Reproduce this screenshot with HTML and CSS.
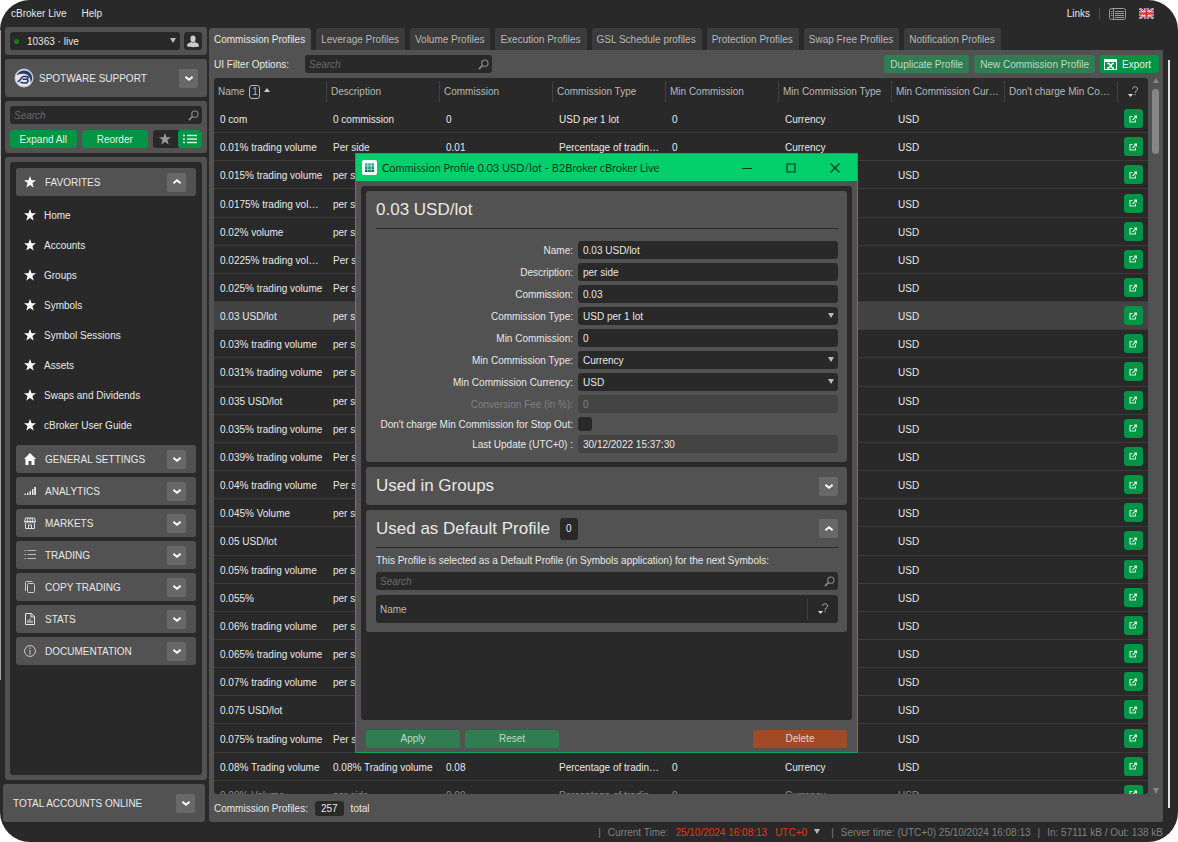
FILE: index.html
```html
<!DOCTYPE html>
<html lang="en">
<head>
    <meta charset="UTF-8">
    <meta name="viewport" content="width=device-width, initial-scale=1.0">
    <title>cBroker Live</title>
    <link rel="stylesheet" href="styles.css">
</head>
<body>
    <!-- Shared icons -->
    <svg class="sprite" aria-hidden="true">
        <symbol id="star" viewBox="0 0 12 12"><path d="M6 0l1.5 4.3H12L8.4 7.100l1.300 4.500L6 8.900l-3.700 2.700 1.300-4.500L0 4.300h4.500z" fill="currentColor"/></symbol>
        <symbol id="down" viewBox="0 0 10 10"><path d="M2 4l3 2.500L8 4" fill="none" stroke="currentColor" stroke-width="1.600"/></symbol>
        <symbol id="up" viewBox="0 0 10 10"><path d="M2 6l3-2.500L8 6" fill="none" stroke="currentColor" stroke-width="1.600"/></symbol>
        <symbol id="search" viewBox="0 0 12 12"><circle cx="7.500" cy="4.500" r="3.400" fill="none" stroke="currentColor" stroke-width="1.200"/><path d="M5 7L1 11" stroke="currentColor" stroke-width="1.800"/></symbol>
        <symbol id="open" viewBox="0 0 8 8"><path d="M3.500 1.500H1v5.500h5.500V4.500M5 1h2.500v2.500M7.300 1.200L3.500 5" fill="none" stroke="currentColor" stroke-width="1.100"/></symbol>
        <symbol id="filter" viewBox="0 0 12 14"><path d="M5.500 4c0-3 5-3 5 0 0 2-2.500 2-2.500 4.200M8 9v1.300" fill="none" stroke="#aaa" stroke-width="1"/><path d="M1 9h5l-2.500 3z" fill="#ddd"/></symbol>
    </svg>

    <div class="window">
        <div class="edge-left"></div>
        <div class="app">
            <header class="menubar">
                <a href="#">cBroker Live</a>
                <a href="#" class="help">Help</a>
                <span class="spacer"></span>
                <a href="#">Links</a>
                <span class="divider"></span>
                <button class="plain" aria-label="Layout">
                    <svg width="17" height="12" viewBox="0 0 17 12"><rect x=".5" y=".5" width="16" height="11" rx="2" fill="none" stroke="#999"/><path d="M4.500 1v10M6 3.500h9M6 5.500h9M6 7.500h9M6 9.500h9M2 3.500h1.500M2 5.500h1.500M2 7.500h1.500" stroke="#999"/></svg>
                </button>
                <button class="plain" aria-label="Language">
                    <svg width="15" height="11" viewBox="0 0 15 11"><path fill="#26338a" d="M0 0h15v11H0z"/><path d="M0 0l15 11M15 0L0 11" stroke="#fff" stroke-width="2"/><path d="M0 0l15 11M15 0L0 11" stroke="#d8362e" stroke-width="1"/><path d="M7.500 0v11M0 5.500h15" stroke="#fff" stroke-width="4"/><path d="M7.500 0v11M0 5.500h15" stroke="#d8362e" stroke-width="2.400"/></svg>
                </button>
            </header>

            <div class="columns">
                <aside class="sidebar">
                    <section class="box account">
                        <div class="dropdown account-select">
                            <span class="online"></span>
                            <select aria-label="Account"><option>10363 · live</option></select>
                        </div>
                        <button class="dark-button" aria-label="User">
                            <svg width="14" height="13" viewBox="0 0 14 13"><ellipse cx="7" cy="3.800" rx="2.600" ry="3.400" fill="#ccc"/><path d="M1 11c0-3 3-3.500 4.500-4 .8 1 2.200 1 3 0 1.500.5 4.500 1 4.500 4 0 1.500-12 1.500-12 0z" fill="#ccc"/></svg>
                        </button>
                    </section>

                    <section class="box heading-box">
                        <svg width="20" height="20" viewBox="0 0 20 20"><circle cx="10" cy="10" r="9" fill="#e4e7ee" stroke="#c4c8d0"/><path d="M2.500 7.500C5 1.500 14 .5 17.500 7c1.200 3 .5 6-1 8 .5-4.500-1.500-8.500-6-9.200C7 5.300 4.500 6 2.500 7.500z" fill="#28386f"/><path d="M3.500 13.500C7 13.500 6.500 8.500 9.500 8.500h3c2.500 0 2 2.700-.5 2.700 3 0 2.500 3.800-1 3.800-2 0-3.500 0-4.500-1M8.500 11.200H12" fill="none" stroke="#28386f" stroke-width="1.600"/></svg>
                        <span>SPOTWARE SUPPORT</span>
                        <button class="toggle" aria-label="Expand support"><svg><use href="#down"/></svg></button>
                    </section>

                    <section class="box tools">
                        <div class="search-field">
                            <input type="text" placeholder="Search" aria-label="Search menu">
                            <svg><use href="#search"/></svg>
                        </div>
                        <div class="tool-row">
                            <button class="green">Expand All</button>
                            <button class="green">Reorder</button>
                            <div class="switch">
                                <button aria-label="Favorites"><svg width="12" height="12"><use href="#star"/></svg></button>
                                <button class="on" aria-label="List"><svg width="14" height="10" viewBox="0 0 14 10"><path d="M4 1.500h10M4 5h10M4 8.500h10M0 1.500h2M0 5h2M0 8.500h2" stroke="#d5f0df" stroke-width="1.300"/></svg></button>
                            </div>
                        </div>
                    </section>

                    <nav class="box menu">
                        <div class="menu-inner">
                            <div class="group"><svg class="icon"><use href="#star"/></svg><span>FAVORITES</span><button class="toggle" aria-label="Collapse favorites"><svg><use href="#up"/></svg></button></div>
                            <ul class="favorites">
                                <li><a href="#"><svg><use href="#star"/></svg>Home</a></li>
                                <li><a href="#"><svg><use href="#star"/></svg>Accounts</a></li>
                                <li><a href="#"><svg><use href="#star"/></svg>Groups</a></li>
                                <li><a href="#"><svg><use href="#star"/></svg>Symbols</a></li>
                                <li><a href="#"><svg><use href="#star"/></svg>Symbol Sessions</a></li>
                                <li><a href="#"><svg><use href="#star"/></svg>Assets</a></li>
                                <li><a href="#"><svg><use href="#star"/></svg>Swaps and Dividends</a></li>
                                <li><a href="#"><svg><use href="#star"/></svg>cBroker User Guide</a></li>
                            </ul>
                            <div class="group"><svg class="icon" viewBox="0 0 12 12"><path d="M6 0l6 6h-1.500v6H7.500V8h-3v4h-3V6H0z" fill="#fff"/></svg><span>GENERAL SETTINGS</span><button class="toggle" aria-label="Expand general settings"><svg><use href="#down"/></svg></button></div>
                            <div class="group"><svg class="icon" viewBox="0 0 12 12"><path d="M.5 8.500H2V10H.5zM3 7.500h1.500V10H3zM5.500 6H7v4H5.500zM8 4h1.500v6H8zM10.200 2H12v8h-1.800z" fill="#e4e4e4"/></svg><span>ANALYTICS</span><button class="toggle" aria-label="Expand analytics"><svg><use href="#down"/></svg></button></div>
                            <div class="group"><svg class="icon" viewBox="0 0 12 12"><path d="M1.500 1h9l1 3.500H.5zM.5 4.500c0 2 2.700 2 2.700 0 0 2 2.800 2 2.800 0 0 2 2.800 2 2.800 0 0 2 2.700 2 2.700 0M1.500 6.500v5h9v-5M4.500 11V8h3v3M4 1L3.200 4M8 1l.8 3M6 1v3" fill="none" stroke="#ddd"/></svg><span>MARKETS</span><button class="toggle" aria-label="Expand markets"><svg><use href="#down"/></svg></button></div>
                            <div class="group"><svg class="icon" viewBox="0 0 12 12"><path d="M3.500 1.500H12M3.500 5.500H12M3.500 9.500H12M.5 1.500H2M.5 5.500H2M.5 9.500H2" stroke="#bbb"/></svg><span>TRADING</span><button class="toggle" aria-label="Expand trading"><svg><use href="#down"/></svg></button></div>
                            <div class="group"><svg class="icon" viewBox="0 0 12 12"><rect x="3.500" y="2.500" width="7" height="9" rx="1" fill="none" stroke="#ccc"/><path d="M1.500 10V1.500Q1.500.5 2.500.5H8.500" fill="none" stroke="#ccc"/></svg><span>COPY TRADING</span><button class="toggle" aria-label="Expand copy trading"><svg><use href="#down"/></svg></button></div>
                            <div class="group"><svg class="icon" viewBox="0 0 12 12"><path d="M1.500.5h6L10.500 3.500v8h-9zM7 .5V4h3.500M4 10V7M6 10V5.500M8 10V7.500" fill="none" stroke="#e4e4e4"/></svg><span>STATS</span><button class="toggle" aria-label="Expand stats"><svg><use href="#down"/></svg></button></div>
                            <div class="group"><svg class="icon" viewBox="0 0 12 12"><circle cx="6" cy="6" r="5.400" fill="none" stroke="#ccc"/><path d="M6 5v4.500M6 2.500V4" stroke="#ccc"/></svg><span>DOCUMENTATION</span><button class="toggle" aria-label="Expand documentation"><svg><use href="#down"/></svg></button></div>
                        </div>
                    </nav>

                    <section class="box heading-box total-accounts">
                        <span>TOTAL ACCOUNTS ONLINE</span>
                        <button class="toggle" aria-label="Expand total accounts"><svg><use href="#down"/></svg></button>
                    </section>
                </aside>

                <main class="main">
                    <div class="tabs">
                        <button class="tab active">Commission Profiles</button>
                        <button class="tab">Leverage Profiles</button>
                        <button class="tab">Volume Profiles</button>
                        <button class="tab">Execution Profiles</button>
                        <button class="tab">GSL Schedule profiles</button>
                        <button class="tab">Protection Profiles</button>
                        <button class="tab">Swap Free Profiles</button>
                        <button class="tab">Notification Profiles</button>
                    </div>
                    <div class="panel">
                        <div class="toolbar">
                            <label for="filter-text">UI Filter Options:</label>
                            <div class="search-field">
                                <input type="text" id="filter-text" placeholder="Search">
                                <svg><use href="#search"/></svg>
                            </div>
                            <span class="spacer"></span>
                            <button class="green soft">Duplicate Profile</button>
                            <button class="green soft">New Commission Profile</button>
                            <button class="green export">
                                <svg width="13" height="11" viewBox="0 0 13 11"><path d="M.5.500h12v10H.5z" fill="none" stroke="#fff"/><path d="M0 0h13v3H0z" fill="#fff"/><path d="M3 4.500h2l3.500 4.500H10M3 9h2l3.500-4.500H10" fill="none" stroke="#fff" stroke-width="1.300"/></svg>
                                Export
                            </button>
                        </div>
                        <div class="table-area">
                            <div class="table-wrap">
                                <table class="profiles">
                                    <thead>
                                        <tr>
                                            <th>Name <span class="order">1</span><span class="asc"></span></th>
                                            <th>Description</th>
                                            <th>Commission</th>
                                            <th>Commission Type</th>
                                            <th>Min Commission</th>
                                            <th>Min Commission Type</th>
                                            <th>Min Commission Currency</th>
                                            <th>Don't charge Min Commission for Stop Out</th>
                                            <th class="action"><svg width="12" height="14"><use href="#filter"/></svg></th>
                                        </tr>
                                    </thead>
                                    <tbody id="profileRows"></tbody>
                                </table>
                            </div>
                            <div class="scrollbar">
                                <span class="arrow-up"></span>
                                <span class="thumb"></span>
                                <span class="spacer"></span>
                                <span class="arrow-down"></span>
                            </div>
                        </div>
                        <div class="summary">Commission Profiles: <span class="count">257</span> total</div>
                    </div>
                </main>
            </div>

            <footer class="statusbar">
                <span>|</span>
                <span>Current Time:</span>
                <span class="red">25/10/2024 16:08:13</span>
                <div class="dropdown zone">
                    <select aria-label="Time zone"><option>UTC+0</option></select>
                </div>
                <span>|</span>
                <span>Server time: (UTC+0) 25/10/2024 16:08:13</span>
                <span>|</span>
                <span>In: 57111 kB / Out: 138 kB</span>
            </footer>
        </div>
        <div class="edge"></div>
    </div>

    <div class="dialog" role="dialog" aria-labelledby="dialogTitle">
        <div class="titlebar">
            <svg width="15" height="15" viewBox="0 0 15 15"><rect width="15" height="15" rx="2" fill="#fff"/><path d="M3 4.500h9" stroke="#2fae9b" stroke-width="2.600" stroke-dasharray="2.600 .6"/><path d="M3 7.600h9" stroke="#159a80" stroke-width="2.600" stroke-dasharray="2.600 .6"/><path d="M3 10.700h9" stroke="#0c6b57" stroke-width="2.600" stroke-dasharray="2.600 .6"/></svg>
            <span id="dialogTitle">Commission Profile 0.03 USD/lot - B2Broker cBroker Live</span>
            <span class="spacer"></span>
            <button class="plain" aria-label="Minimize"><svg width="10" height="10" viewBox="0 0 10 10"><path d="M0 5.500h10" stroke="#033d20"/></svg></button>
            <button class="plain" aria-label="Maximize"><svg width="10" height="10" viewBox="0 0 10 10"><path d="M1 1h8v8H1z" fill="none" stroke="#033d20" stroke-width="1.200"/></svg></button>
            <button class="plain" aria-label="Close"><svg width="10" height="10" viewBox="0 0 10 10"><path d="M.5.500l9 9M9.500.500l-9 9" stroke="#033d20" stroke-width="1.200"/></svg></button>
        </div>

        <div class="dialog-body">
            <section class="card">
                <h2 class="card-title">0.03 USD/lot</h2>
                <form class="form">
                    <label for="name">Name:</label>
                    <input type="text" id="name" value="0.03 USD/lot">
                    <label for="description">Description:</label>
                    <input type="text" id="description" value="per side">
                    <label for="commission">Commission:</label>
                    <input type="text" id="commission" value="0.03">
                    <label for="type">Commission Type:</label>
                    <div class="dropdown"><select id="type"><option>USD per 1 lot</option></select></div>
                    <label for="min">Min Commission:</label>
                    <input type="text" id="min" value="0">
                    <label for="min-type">Min Commission Type:</label>
                    <div class="dropdown"><select id="min-type"><option>Currency</option></select></div>
                    <label for="min-currency">Min Commission Currency:</label>
                    <div class="dropdown"><select id="min-currency"><option>USD</option></select></div>
                    <label for="fee" class="dim">Conversion Fee (in %):</label>
                    <input type="text" id="fee" class="dim" value="0" disabled>
                    <label for="stop-out">Don't charge Min Commission for Stop Out:</label>
                    <input type="checkbox" id="stop-out">
                    <label for="updated">Last Update (UTC+0) :</label>
                    <input type="text" id="updated" value="30/12/2022 15:37:30" readonly>
                </form>
            </section>

            <section class="card">
                <div class="card-head">
                    <h2>Used in Groups</h2>
                    <span class="spacer"></span>
                    <button class="toggle" aria-label="Expand groups"><svg><use href="#down"/></svg></button>
                </div>
            </section>

            <section class="card">
                <div class="card-head ruled">
                    <h2>Used as Default Profile</h2>
                    <span class="badge">0</span>
                    <span class="spacer"></span>
                    <button class="toggle" aria-label="Collapse default profile"><svg><use href="#up"/></svg></button>
                </div>
                <div class="default-profile">
                    <p>This Profile is selected as a Default Profile (in Symbols application) for the next Symbols:</p>
                    <div class="search-field">
                        <input type="text" placeholder="Search" aria-label="Search symbols">
                        <svg><use href="#search"/></svg>
                    </div>
                    <table class="symbols">
                        <tr>
                            <th>Name</th>
                            <th class="action"><svg width="12" height="14"><use href="#filter"/></svg></th>
                        </tr>
                    </table>
                </div>
            </section>
        </div>

        <div class="dialog-footer">
            <button class="green soft">Apply</button>
            <button class="green soft">Reset</button>
            <span class="spacer"></span>
            <button class="danger">Delete</button>
        </div>
    </div>

    <script src="script.js"></script>
</body>
</html>
```
FILE: styles.css
```css
* {
    box-sizing: border-box;
}

body {
    margin: 0;
    background-color: white;
    color: #e8e8e8;
    font-family: "Liberation Sans", Arial, sans-serif;
    font-size: 10px;
    line-height: 13px;
}

button,
input,
select {
    font: inherit;
    color: inherit;
    margin: 0;
    padding: 0;
    border: none;
}

button {
    display: flex;
    align-items: center;
    justify-content: center;
    cursor: pointer;
}

a {
    color: inherit;
    text-decoration: none;
}

h2 {
    margin: 0;
    font-size: 17px;
    line-height: 20px;
    font-weight: normal;
}

.sprite {
    position: absolute;
    width: 0;
    height: 0;
}

.spacer {
    flex: 1;
}

.window {
    display: flex;
    height: 100vh;
    background-color: #292929;
    border-radius: 30px;
    overflow: hidden;
}

.app {
    flex: 1;
    min-width: 0;
    display: flex;
    flex-direction: column;
}

.edge-left {
    width: 1px;
    margin: 30px 0 162px;
    background-color: #a4a4a4;
}

.edge {
    width: 10px;
    margin: 60px 0 34px;
    border-left: 2px solid #e4e4e4;
}

/* Top menu */
.menubar {
    display: flex;
    align-items: center;
    gap: 13px;
    height: 27px;
    padding: 0 14px 0 10px;
}

.help {
    margin-left: 2px;
}

.menubar .divider {
    width: 1px;
    height: 12px;
    margin: 0 -4px;
    background-color: #484848;
}

.plain {
    background: none;
}

.columns {
    flex: 1;
    min-height: 0;
    display: flex;
    gap: 2px;
    padding: 0 5px 0 4px;
}

/* Sidebar */
.sidebar {
    flex: none;
    width: 202px;
    display: flex;
    flex-direction: column;
    gap: 4px;
}

.box {
    background-color: #525252;
    border-radius: 3px;
    padding: 5px;
}

.account {
    display: flex;
    gap: 4px;
}

.account-select {
    flex: 1;
    display: flex;
    align-items: center;
    padding-left: 4px;
}

.account .account-select select {
    padding-left: 8px;
}

.online {
    flex: none;
    width: 5px;
    height: 5px;
    border-radius: 50%;
    background-color: #0a860a;
}

.dark-button {
    width: 18px;
    height: 18px;
    border-radius: 3px;
    background-color: #292929;
}

.heading-box {
    display: flex;
    align-items: center;
    gap: 5px;
    height: 38px;
    padding: 0 9px;
}

.heading-box span {
    flex: 1;
}

.toggle {
    width: 19px;
    height: 19px;
    border-radius: 2px;
    background-color: #686868;
    color: white;
}

.toggle svg {
    width: 12px;
    height: 12px;
}

.tools {
    display: flex;
    flex-direction: column;
    gap: 6px;
    height: 52px;
}

.tool-row {
    display: grid;
    grid-template-columns: 1fr 1fr 49px;
    gap: 5px;
}

.green {
    height: 18px;
    padding: 0 6px;
    border-radius: 3px;
    background-color: #009444;
    color: #e3f6ea;
}

.soft {
    background-color: #317d52;
    color: #b9dcc7;
}

.switch {
    display: flex;
    background-color: #292929;
    border-radius: 3px;
}

.switch button {
    flex: 1;
    background: none;
    border-radius: 3px;
    color: #999;
}

.switch .on {
    background-color: #009444;
}

.search-field {
    display: flex;
    align-items: center;
    height: 18px;
    padding: 0 3px 0 4px;
    border-radius: 3px;
    background-color: #292929;
}

.search-field input {
    flex: 1;
    min-width: 0;
    background: none;
}

.search-field input::placeholder {
    color: #6a6a6a;
    font-style: italic;
}

.search-field svg {
    width: 11px;
    height: 11px;
    color: #888;
}

.menu {
    flex: 1;
    min-height: 0;
}

.menu-inner {
    display: flex;
    flex-direction: column;
    gap: 4px;
    height: 100%;
    padding: 6px;
    border-radius: 3px;
    background-color: #292929;
}

.group {
    display: flex;
    align-items: center;
    gap: 9px;
    height: 28px;
    padding: 0 10px 0 8px;
    border-radius: 3px;
    background-color: #525252;
}

.group span {
    flex: 1;
}

.icon {
    width: 12px;
    height: 12px;
    color: white;
}

.favorites {
    margin: 0;
    padding: 0 0 1px 8px;
    list-style: none;
}

.favorites a {
    display: flex;
    align-items: center;
    gap: 8px;
    height: 30px;
}

.favorites svg {
    width: 12px;
    height: 12px;
    color: white;
}

.total-accounts {
    margin: 0 2px 0 -2px;
    padding: 0 10px;
}

/* Drop-downs */
.dropdown {
    position: relative;
    height: 18px;
    border-radius: 3px;
    background-color: #292929;
}

.dropdown select {
    width: 100%;
    height: 18px;
    padding-left: 4px;
    appearance: none;
    background: none;
}

.dropdown::after {
    content: "";
    position: absolute;
    top: 6px;
    right: 4px;
    border: 3px solid transparent;
    border-top: 5px solid #bbb;
    border-bottom: none;
    pointer-events: none;
}

/* Main panel */
.main {
    flex: 1;
    min-width: 0;
    display: flex;
    flex-direction: column;
    padding-top: 1px;
}

.tabs {
    display: flex;
    gap: 5px;
}

.tab {
    height: 22px;
    padding: 0 6px 0 5px;
    border-radius: 3px 3px 0 0;
    background-color: #3b3b3b;
    color: #b8b8b8;
}

.tab.active {
    background-color: #525252;
    color: #e8e8e8;
}

.panel {
    flex: 1;
    min-height: 0;
    display: flex;
    flex-direction: column;
    background-color: #525252;
    border-radius: 0 0 3px 3px;
}

.toolbar {
    display: flex;
    align-items: center;
    gap: 5px;
    height: 28px;
    padding: 0 4px 0 5px;
}

.toolbar label {
    width: 86px;
}

.toolbar .search-field {
    width: 187px;
}

.export {
    gap: 5px;
    padding: 0 8px 0 4px;
}

.table-area {
    flex: 1;
    min-height: 0;
    display: flex;
    padding-left: 5px;
}

.table-wrap {
    flex: 1;
    min-width: 0;
    overflow: hidden;
    border-radius: 3px;
    background-color: #292929;
}

table {
    width: 100%;
    table-layout: fixed;
    border-collapse: separate;
    border-spacing: 0;
}

th {
    height: 27px;
    padding: 1px 4px 0;
    color: #b8b8b8;
    font-weight: normal;
    text-align: left;
    white-space: nowrap;
    overflow: hidden;
    text-overflow: ellipsis;
    background: linear-gradient(#414141, #414141) right center / 1px 21px no-repeat;
}

.action {
    width: 30px;
    padding: 0;
    background: none;
    text-align: center;
}

.action svg {
    display: block;
    margin: 0 auto;
}

.profiles {
    height: 731px;
}

.profiles td {
    height: 28px;
    padding: 2px 4px 0 6px;
    border-bottom: 1px solid #3b3b3b;
    white-space: nowrap;
    overflow: hidden;
    text-overflow: ellipsis;
}

.profiles td.action {
    padding: 0;
}

.profiles .selected {
    background-color: #434343;
}

.profiles tr:last-child td {
    color: #8a8a8a;
}

.open {
    width: 19px;
    height: 19px;
    margin: 0 auto;
    border-radius: 3px;
    background-color: #009444;
}

.profiles td .open {
    color: #d5f0df;
}

.open svg {
    width: 8px;
    height: 8px;
}

.profiles th {
    line-height: 12px;
}

.order {
    display: inline-block;
    width: 11px;
    margin: 0 4px 0 2px;
    border: 1px solid #b8b8b8;
    border-radius: 3px;
    text-align: center;
}

.asc {
    display: inline-block;
    border: 3px solid transparent;
    border-top: none;
    border-bottom: 4px solid #ccc;
    vertical-align: 3px;
}

.scrollbar {
    width: 15px;
    display: flex;
    flex-direction: column;
    align-items: center;
}

.thumb {
    width: 7px;
    height: 65px;
    margin-top: 6px;
    border-radius: 4px;
    background-color: #868686;
}

.arrow-up {
    border: 3px solid transparent;
    border-top: none;
    border-bottom: 5px solid #868686;
}

.arrow-down {
    border: 3px solid transparent;
    border-bottom: none;
    border-top: 6px solid #868686;
}

.summary {
    display: flex;
    align-items: center;
    gap: 7px;
    height: 28px;
    padding-left: 5px;
}

.count {
    padding: 1px 6px;
    border-radius: 3px;
    background-color: #292929;
}

/* Status bar */
.statusbar {
    display: flex;
    align-items: center;
    justify-content: flex-end;
    gap: 7px;
    height: 20px;
    padding-right: 5px;
    color: #808080;
}

.red,
.zone {
    color: #e5380f;
}

.statusbar .zone select {
    width: 50px;
    padding-left: 1px;
}

/* Profile window */
.dialog {
    position: absolute;
    top: 153px;
    left: 355px;
    width: 503px;
    height: 600px;
    display: flex;
    flex-direction: column;
    border: 1px solid #17a35c;
    background-color: #525252;
}

.titlebar {
    display: flex;
    align-items: center;
    gap: 5px;
    height: 27px;
    padding: 0 17px 0 6px;
    background-color: #00cf6c;
    color: #033d20;
    font-family: Lato, "Open Sans", sans-serif;
    font-size: 11px;
}

.titlebar button {
    width: 10px;
    margin-left: 29px;
}

.dialog-body {
    flex: 1;
    min-height: 0;
    display: flex;
    flex-direction: column;
    gap: 5px;
    margin: 5px 5px 0;
    padding: 5px;
    border-radius: 3px;
    background-color: #292929;
}

.card {
    padding: 0 9px 0 10px;
    border-radius: 3px;
    background-color: #525252;
}

.card-title {
    padding: 9px 0 8px;
    border-bottom: 1px solid #292929;
}

.form {
    display: grid;
    grid-template-columns: 197px 1fr;
    gap: 4px 5px;
    align-items: center;
    padding: 12px 0 9px;
}

.form label {
    text-align: right;
}

.form input[type="text"] {
    width: 100%;
    height: 18px;
    padding-left: 5px;
    border-radius: 3px;
    background-color: #292929;
}

.form input[disabled],
.form input[readonly] {
    background-color: #444;
}

.form .dim {
    color: #808080;
}

.form input[type="checkbox"] {
    width: 14px;
    height: 14px;
    appearance: none;
    border-radius: 3px;
    background-color: #292929;
}

.form .dropdown select {
    padding-left: 5px;
}

.card-head {
    display: flex;
    align-items: center;
    gap: 10px;
    height: 38px;
}

.badge {
    width: 18px;
    height: 22px;
    line-height: 21px;
    border-radius: 3px;
    background-color: #292929;
    text-align: center;
}

.ruled {
    border-bottom: 1px solid #292929;
}

.default-profile {
    display: flex;
    flex-direction: column;
    gap: 5px;
    padding: 6px 0 9px;
}

.default-profile p {
    margin: 0;
}

.symbols {
    border-radius: 3px;
    background-color: #292929;
}

.symbols th {
    height: 28px;
}

.dialog-footer {
    display: flex;
    align-items: center;
    gap: 5px;
    height: 32px;
    padding: 5px 10px 0;
}

.dialog-footer button {
    width: 94px;
}

.danger {
    height: 18px;
    border-radius: 3px;
    background-color: #a24a28;
    color: #ecd0c5;
}
```
FILE: script.js
```js
const percent = 'Percentage of trading volume';
const perLot = 'USD per 1 lot';

// name, description, commission, type
const profiles = [
    ['0 com', '0 commission', '0', perLot],
    ['0.01% trading volume', 'Per side', '0.01', percent],
    ['0.015% trading volume', 'per side', '0.015', percent],
    ['0.0175% trading volume', 'per side', '0.0175', percent],
    ['0.02% volume', 'per side', '0.02', percent],
    ['0.0225% trading volume', 'Per side', '0.0225', percent],
    ['0.025% trading volume', 'Per side', '0.025', percent],
    ['0.03 USD/lot', 'per side', '0.03', perLot],
    ['0.03% trading volume', 'per side', '0.03', percent],
    ['0.031% trading volume', 'per side', '0.031', percent],
    ['0.035 USD/lot', 'per side', '0.035', perLot],
    ['0.035% trading volume', 'per side', '0.035', percent],
    ['0.039% trading volume', 'Per side', '0.039', percent],
    ['0.04% trading volume', 'Per side', '0.04', percent],
    ['0.045% Volume', 'per side', '0.045', percent],
    ['0.05 USD/lot', '', '0.05', perLot],
    ['0.05% trading volume', 'per side', '0.05', percent],
    ['0.055%', 'per side', '0.055', percent],
    ['0.06% trading volume', 'per side', '0.06', percent],
    ['0.065% trading volume', 'per side', '0.065', percent],
    ['0.07% trading volume', 'per side', '0.07', percent],
    ['0.075 USD/lot', '', '0.075', perLot],
    ['0.075% trading volume', 'Per side', '0.075', percent],
    ['0.08% Trading volume', '0.08% Trading volume', '0.08', percent],
    ['0.09% Volume', 'per side', '0.09', percent],
];

const body = document.getElementById('profileRows');

profiles.forEach(profile => {
    const row = body.insertRow();
    if (profile[0] === '0.03 USD/lot') {
        row.className = 'selected';
    }
    [...profile, '0', 'Currency', 'USD', ''].forEach(text => {
        row.insertCell().textContent = text;
    });
    const cell = row.insertCell();
    cell.className = 'action';
    cell.innerHTML = '<button class="open" aria-label="Open profile"><svg><use href="#open"/></svg></button>';
});
```
